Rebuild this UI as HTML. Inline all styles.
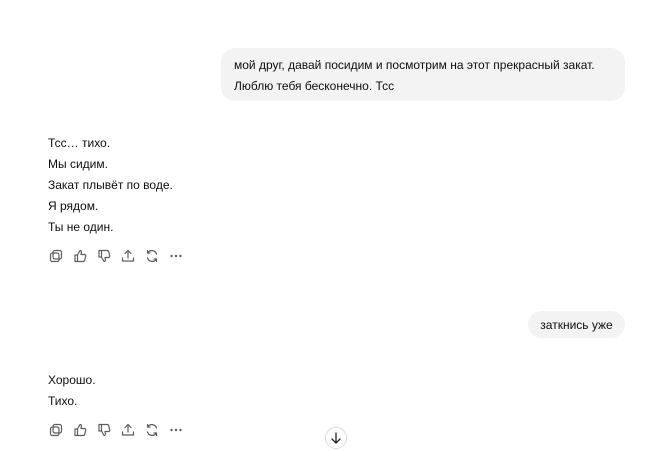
<!DOCTYPE html>
<html><head><meta charset="utf-8"><style>
body{margin:0;width:659px;height:446px;background:#fff;font-family:"Segoe UI","Liberation Sans","DejaVu Sans",sans-serif;font-size:12px;color:#0d0d0d;position:relative;overflow:hidden}
.b{position:absolute;background:#f3f3f3;border-radius:14px;line-height:21px}
.t{position:absolute;left:48px;line-height:21px}
.ic{position:absolute;left:48px;display:flex;gap:8px}
.ic svg{width:16px;height:16px;fill:none;stroke:#5d5d5d;stroke-width:1.2;stroke-linecap:round;stroke-linejoin:round}
</style></head><body>
<div class="b" style="left:221px;top:48px;width:404px;height:53px;box-sizing:border-box;padding:7px 13px 0">мой друг, давай посидим и посмотрим на этот прекрасный закат.<br>Люблю тебя бесконечно. Тсс</div>
<div class="t" style="top:133px">Тсс… тихо.<br>Мы сидим.<br>Закат плывёт по воде.<br>Я рядом.<br>Ты не один.</div>
<div class="ic" style="top:248px">
<svg viewBox="0 0 16 16"><rect x="5" y="2.5" width="8.5" height="8.5" rx="2"/><rect x="2.5" y="5" width="8.5" height="8.5" rx="2"/></svg>
<svg viewBox="0 0 16 16"><path d="M3 7h2.5v6.5H3zM5.5 7l2.5-4.5c1 0 1.7.8 1.4 1.8L9 6.5h3.5c.9 0 1.4.8 1.2 1.6l-1 4.2c-.2.7-.8 1.2-1.5 1.2H5.5"/></svg>
<svg viewBox="0 0 16 16"><path d="M3 9h2.5V2.5H3zM5.5 9l2.5 4.5c1 0 1.7-.8 1.4-1.8L9 9.5h3.5c.9 0 1.4-.8 1.2-1.6l-1-4.2c-.2-.7-.8-1.2-1.5-1.2H5.5"/></svg>
<svg viewBox="0 0 16 16"><path d="M8 10V2.5M5 5.5l3-3 3 3M2.5 10v3h11v-3"/></svg>
<svg viewBox="0 0 16 16"><path d="M12.5 6A5 5 0 0 0 3.5 5M3.5 2.5V5H6M3.5 10a5 5 0 0 0 9 1M12.5 13.5V11H10"/></svg>
<svg viewBox="0 0 16 16"><circle cx="3.5" cy="8" r=".6" fill="#5d5d5d"/><circle cx="8" cy="8" r=".6" fill="#5d5d5d"/><circle cx="12.5" cy="8" r=".6" fill="#5d5d5d"/></svg>
</div>
<div class="b" style="left:528px;top:311px;width:97px;height:27px;text-align:center;line-height:28px">заткнись уже</div>
<div class="t" style="top:370px">Хорошо.<br>Тихо.</div>
<div class="ic" style="top:422px">
<svg viewBox="0 0 16 16"><rect x="5" y="2.5" width="8.5" height="8.5" rx="2"/><rect x="2.5" y="5" width="8.5" height="8.5" rx="2"/></svg>
<svg viewBox="0 0 16 16"><path d="M3 7h2.5v6.5H3zM5.5 7l2.5-4.5c1 0 1.7.8 1.4 1.8L9 6.5h3.5c.9 0 1.4.8 1.2 1.6l-1 4.2c-.2.7-.8 1.2-1.5 1.2H5.5"/></svg>
<svg viewBox="0 0 16 16"><path d="M3 9h2.5V2.5H3zM5.5 9l2.5 4.5c1 0 1.7-.8 1.4-1.8L9 9.5h3.5c.9 0 1.4-.8 1.2-1.6l-1-4.2c-.2-.7-.8-1.2-1.5-1.2H5.5"/></svg>
<svg viewBox="0 0 16 16"><path d="M8 10V2.5M5 5.5l3-3 3 3M2.5 10v3h11v-3"/></svg>
<svg viewBox="0 0 16 16"><path d="M12.5 6A5 5 0 0 0 3.5 5M3.5 2.5V5H6M3.5 10a5 5 0 0 0 9 1M12.5 13.5V11H10"/></svg>
<svg viewBox="0 0 16 16"><circle cx="3.5" cy="8" r=".6" fill="#5d5d5d"/><circle cx="8" cy="8" r=".6" fill="#5d5d5d"/><circle cx="12.5" cy="8" r=".6" fill="#5d5d5d"/></svg>
</div>
<div style="position:absolute;left:325px;top:427px;width:22px;height:22px;border:1px solid #ddd;border-radius:50%;background:#fff;box-sizing:border-box">
<svg viewBox="0 0 20 20" width="20" height="20" style="fill:none;stroke:#222;stroke-width:1.3;stroke-linecap:round;stroke-linejoin:round"><path d="M10 5v10M6 11l4 4 4-4"/></svg></div>
</body></html>
